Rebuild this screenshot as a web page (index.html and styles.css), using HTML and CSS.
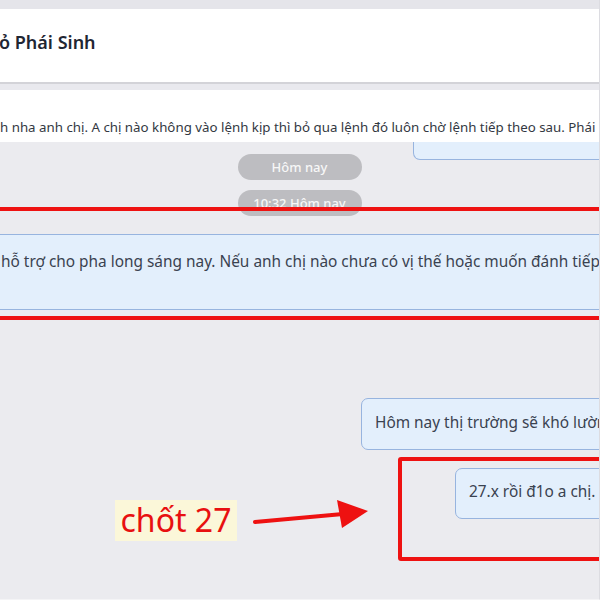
FILE: index.html
```html
<!DOCTYPE html>
<html lang="vi">
<head>
<meta charset="utf-8">
<title>Phái Sinh</title>
<link rel="stylesheet" href="styles.css">
</head>
<body>
<div class="page">
  <div class="topstrip"></div>
  <header class="header">
    <div class="title">ỏ Phái Sinh</div>
    <div class="subtitle">.</div>
  </header>
  <div class="strip"></div>
  <div class="pinned">h nha anh chị. A chị nào không vào lệnh kịp thì bỏ qua lệnh đó luôn chờ lệnh tiếp theo sau. Phái</div>
  <main class="chat">
    <div class="bubble stub"></div>
    <div class="pill pill-first">Hôm nay</div>
    <div class="pill pill-second">10:32 Hôm nay</div>
    <div class="mark mark-wide">
      <div class="bubble wide">hỗ trợ cho pha long sáng nay. Nếu anh chị nào chưa có vị thế hoặc muốn đánh tiếp</div>
    </div>
    <div class="bubble mine">Hôm nay thị trường sẽ khó lường</div>
    <div class="note-row">
      <div class="note">chốt 27</div>
      <svg class="arrow" width="161" height="104" viewBox="0 0 161 104">
        <line x1="18" y1="65" x2="106" y2="57" stroke="#ee1111" stroke-width="4" stroke-linecap="round"/>
        <polygon points="100,43 131,54 105,71" fill="#ee1111"/>
      </svg>
      <div class="mark mark-box">
        <div class="bubble small">27.x rồi đ1o a chị. chốt</div>
      </div>
    </div>
  </main>
</div>
</body>
</html>
```

FILE: styles.css
```css
html, body {
  margin: 0;
  padding: 0;
}
body {
  width: 600px;
  height: 600px;
  overflow: hidden;
  background: #ebebef;
  font-family: "Noto Sans", "Open Sans", sans-serif;
  color: #3a4250;
}
.page {
  width: 600px;
  height: 600px;
  overflow: hidden;
  border-right: 1px solid #dcdce1;
  border-bottom: 1px solid #f4f4f6;
  box-sizing: border-box;
}
.topstrip {
  height: 9px;
  background: #e5e5ea;
}
.header {
  height: 73px;
  background: #ffffff;
  border-bottom: 2px solid #d3d3d8;
  box-sizing: content-box;
  overflow: hidden;
}
.title {
  margin: 20px 0 0 -1px;
  font-size: 18px;
  font-weight: 600;
  line-height: 26px;
  color: #1f2633;
  white-space: nowrap;
}
.subtitle {
  margin: 2px 0 0 -3px;
  font-size: 12px;
  line-height: 16px;
  color: #9a9ca3;
}
.strip {
  height: 6px;
  background: #e9e9ee;
}
.pinned {
  height: 52px;
  background: #ffffff;
  box-sizing: border-box;
  padding-top: 28px;
  font-size: 13.3px;
  line-height: 18px;
  color: #333842;
  white-space: nowrap;
  overflow: hidden;
  position: relative;
  z-index: 2;
}
.chat {
  white-space: nowrap;
}
.bubble {
  background: #e3effc;
  border: 1.5px solid #97b4df;
  border-radius: 7px;
  box-sizing: border-box;
  font-size: 15.4px;
  line-height: 20px;
  color: #3a4250;
  overflow: hidden;
}
.stub {
  margin-left: 413px;
  width: 220px;
  height: 18px;
  border-top: none;
  border-top-left-radius: 0;
  border-top-right-radius: 0;
}
.pill {
  width: 124px;
  height: 26px;
  margin: 0 auto;
  border-radius: 13px;
  background: #bdbdc1;
  color: #f7f7f7;
  font-size: 13px;
  font-weight: 500;
  line-height: 26px;
  text-align: center;
  box-sizing: border-box;
}
.pill-first {
  margin-top: -6px;
}
.pill-second {
  margin-top: 10px;
}
.mark {
  border: 4px solid #ee1111;
  box-sizing: border-box;
  position: relative;
  z-index: 1;
}
.mark-wide {
  margin: -9px -10px 0 -10px;
  height: 113px;
  border-left: none;
  border-right: none;
  padding-top: 23px;
}
.wide {
  margin-left: -10px;
  width: 680px;
  height: 76px;
  padding: 17px 0 0 20px;
  border-radius: 0;
}
.mine {
  margin: 78px 0 0 361px;
  width: 300px;
  height: 52px;
  padding: 14px 0 0 13px;
}
.note-row {
  margin-top: 7px;
  height: 104px;
  display: flex;
  align-items: flex-start;
}
.note {
  margin: 43px 0 0 115px;
  width: 122px;
  height: 41px;
  flex: none;
  background: #fbf7d9;
  color: #e81010;
  font-size: 32px;
  line-height: 40px;
  text-align: center;
}
.arrow {
  flex: none;
  display: block;
}
.mark-box {
  flex: none;
  width: 240px;
  height: 104px;
  border-radius: 3px;
  padding: 7px 0 0 53px;
}
.small {
  width: 220px;
  height: 51px;
  padding: 13px 0 0 13px;
}
```
